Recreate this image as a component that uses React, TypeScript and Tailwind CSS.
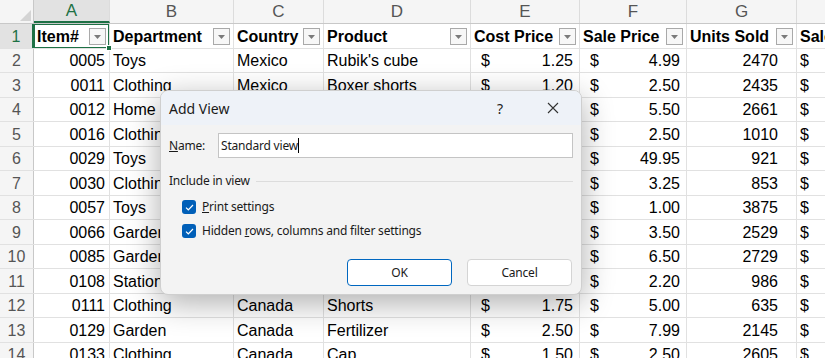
import React from 'react';

// Column layout for the sheet
const cols = [
  { key: 'A', w: 'w-[76px]', title: 'Item#' },
  { key: 'B', w: 'w-[124px]', title: 'Department' },
  { key: 'C', w: 'w-[90px]', title: 'Country' },
  { key: 'D', w: 'w-[147px]', title: 'Product' },
  { key: 'E', w: 'w-[109px]', title: 'Cost Price' },
  { key: 'F', w: 'w-[107px]', title: 'Sale Price' },
  { key: 'G', w: 'w-[110px]', title: 'Units Sold' },
  { key: 'H', w: 'w-[80px]', title: 'Sale Total' },
];

const rows = [
  ['0005', 'Toys', 'Mexico', "Rubik's cube", '1.25', '4.99', '2470'],
  ['0011', 'Clothing', 'Mexico', 'Boxer shorts', '1.20', '2.50', '2435'],
  ['0012', 'Home', 'Mexico', 'Candle', '2.10', '5.50', '2661'],
  ['0016', 'Clothing', 'Mexico', 'Socks', '0.90', '2.50', '1010'],
  ['0029', 'Toys', 'Mexico', 'Drone', '22.50', '49.95', '921'],
  ['0030', 'Clothing', 'Mexico', 'T-shirt', '1.30', '3.25', '853'],
  ['0057', 'Toys', 'Canada', 'Yo-yo', '0.40', '1.00', '3875'],
  ['0066', 'Garden', 'Canada', 'Seeds', '1.10', '3.50', '2529'],
  ['0085', 'Garden', 'Canada', 'Gloves', '2.60', '6.50', '2729'],
  ['0108', 'Stationery', 'Canada', 'Notebook', '0.80', '2.20', '986'],
  ['0111', 'Clothing', 'Canada', 'Shorts', '1.75', '5.00', '635'],
  ['0129', 'Garden', 'Canada', 'Fertilizer', '2.50', '7.99', '2145'],
  ['0133', 'Clothing', 'Canada', 'Cap', '1.50', '2.50', '2605'],
];

const cell = 'h-full pt-[2px] border-r border-[#e1e1e1] flex items-center shrink-0 overflow-hidden whitespace-nowrap';

const FilterBtn = () => (
  <div className="ml-auto mr-[3px] w-[17px] h-[17px] shrink-0 border border-[#a9a9a9] bg-[#f7f7f7] flex items-center justify-center">
    <svg width="7" height="4" viewBox="0 0 7 4">
      <path d="M0 0h7L3.5 4z" fill="#7a7a7a" />
    </svg>
  </div>
);

const Money = ({ v }: { v: string }) => (
  <>
    <span className="pl-[10px]">$</span>
    <span className="ml-auto pr-[6px]">{v}</span>
  </>
);

const Check = ({ label }: { label: React.ReactNode }) => (
  <div className="flex items-center h-[24px] pl-[21px]">
    <div className="w-[14px] h-[14px] rounded-[3px] bg-[#005fb8] flex items-center justify-center">
      <svg width="9" height="7" viewBox="0 0 9 7">
        <path d="M1 3.6 3.3 5.8 8 1" stroke="white" strokeWidth="1.2" fill="none" />
      </svg>
    </div>
    <span className="ml-[6px]">{label}</span>
  </div>
);

export default function App() {
  return (
    <div className="relative w-[825px] h-[358px] overflow-hidden bg-white text-[16px] text-black font-['Liberation_Sans',Arial,sans-serif]">
      {/* column letters */}
      <div className="flex h-[24px] bg-[#f5f5f5] border-b border-[#c8c8c8]">
        <div className="relative w-[34px] h-full border-r border-[#c8c8c8] shrink-0">
          <svg className="absolute right-[2px] bottom-[2px]" width="11" height="11" viewBox="0 0 11 11">
            <path d="M11 0v11H0z" fill="#d4d4d4" />
          </svg>
        </div>
        {cols.map((c) => (
          <div
            key={c.key}
            className={`${c.w} h-full shrink-0 border-r border-[#dcdcdc] flex items-center justify-center text-[17px] ${c.key === 'A' ? 'bg-[#e2e2e2] text-[#1e7145] border-b-2 border-b-[#1e7145]' : 'text-[#555]'}`}
          >
            {c.key}
          </div>
        ))}
      </div>

      {/* header row 1 */}
      <div className="flex h-[24.5px] border-b border-[#e1e1e1]">
        <div className="w-[34px] h-full pt-[2px] shrink-0 bg-[#e2e2e2] border-r-2 border-[#1e7145] flex items-center justify-center text-[#1e7145] text-[16px]">
          1
        </div>
        {cols.map((c, i) => (
          <div key={c.key} className={`${c.w} ${cell} relative font-bold pl-[3px]`}>
            {i === 0 && (
              <div className="absolute inset-[-1px] border-2 border-[#1e7145] pointer-events-none" />
            )}
            <span>{c.title}</span>
            {i < 7 && <FilterBtn />}
          </div>
        ))}
      </div>

      {/* data rows */}
      {rows.map((r, ri) => (
        <div key={ri} className="flex h-[24.5px] border-b border-[#e1e1e1]">
          <div className="w-[34px] h-full pt-[2px] shrink-0 bg-[#f5f5f5] border-r border-[#c8c8c8] flex items-center justify-center text-[#555]">
            {ri + 2}
          </div>
          <div className={`${cols[0].w} ${cell} justify-end pr-[4px]`}>{r[0]}</div>
          <div className={`${cols[1].w} ${cell} pl-[3px]`}>{r[1]}</div>
          <div className={`${cols[2].w} ${cell} pl-[3px]`}>{r[2]}</div>
          <div className={`${cols[3].w} ${cell} pl-[3px]`}>{r[3]}</div>
          <div className={`${cols[4].w} ${cell}`}>
            <Money v={r[4]} />
          </div>
          <div className={`${cols[5].w} ${cell}`}>
            <Money v={r[5]} />
          </div>
          <div className={`${cols[6].w} ${cell} justify-end pr-[18px]`}>{r[6]}</div>
          <div className={`${cols[7].w} ${cell} pl-[3px]`}>$</div>
        </div>
      ))}

      {/* selection fill handle */}
      <div className="absolute left-[106px] top-[45px] w-[6px] h-[6px] bg-[#1e7145] border border-white" />

      {/* Add View dialog */}
      <div className="absolute left-[160px] top-[90px] w-[422px] h-[205px] rounded-[8px] bg-[#f3f3f3] border border-[#cfcfcf] shadow-[0_8px_32px_rgba(0,0,0,0.32)] overflow-hidden font-['Noto_Sans',sans-serif] text-[12px] tracking-[-0.2px] text-[#1a1a1a]">
        <div className="h-[34px] bg-[#eef2f8] flex items-center pl-[8px]">
          <span className="text-[14px] tracking-normal">Add View</span>
          <span className="ml-auto mr-[44px] text-[14px] text-[#222]">?</span>
          <svg className="mr-[22px]" width="12" height="12" viewBox="0 0 12 12">
            <path d="M1 1 11 11M11 1 1 11" stroke="#333" strokeWidth="1.1" />
          </svg>
        </div>
        <div className="flex items-center mt-[8px] pl-[8px] pr-[8px]">
          <span className="w-[49px]">
            <span className="underline">N</span>ame:
          </span>
          <div className="flex-1 h-[25px] bg-white border border-[#c4c4c4] flex items-center pl-[2px]">
            <span>Standard view</span>
            <span className="w-[1px] h-[15px] bg-black" />
          </div>
        </div>
        <div className="flex items-center mt-[14px] pl-[8px] pr-[8px] h-[18px]">
          <span>Include in view</span>
          <div className="flex-1 h-[1px] bg-[#dcdcdc] ml-[6px]" />
        </div>
        <div className="mt-[5px]">
          <Check
            label={
              <>
                <span className="underline">P</span>rint settings
              </>
            }
          />
          <Check
            label={
              <>
                Hidden <span className="underline">r</span>ows, columns and filter settings
              </>
            }
          />
        </div>
        <div className="flex justify-end gap-[15px] pr-[9px] mt-[16px]">
          <button className="w-[105px] h-[27px] rounded-[4px] bg-white border border-[#0067c0] text-[12px]">OK</button>
          <button className="w-[105px] h-[27px] rounded-[4px] bg-white border border-[#d4d4d4] text-[12px]">Cancel</button>
        </div>
      </div>
    </div>
  );
}
